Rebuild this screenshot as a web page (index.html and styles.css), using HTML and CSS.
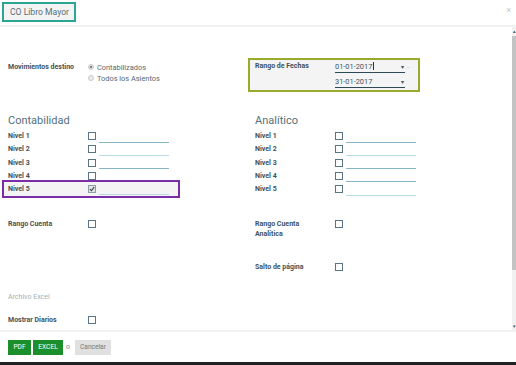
FILE: index.html
```html
<!DOCTYPE html>
<html lang="es">

<head>
  <meta charset="UTF-8">
  <meta name="viewport" content="width=device-width, initial-scale=1.0">
  <link rel="stylesheet" href="styles.css">
  <title>CO Libro Mayor</title>
</head>

<body>

  <div class="dialog">
    <div class="header">
      <div class="title">CO Libro Mayor</div>
      <span class="close">&times;</span>
    </div>

    <div class="main">
      <div class="content">

        <div class="grid top">
          <div class="col col-moves">
            <div class="row">
              <span class="label">Movimientos destino</span>
              <div class="radios">
                <div class="radio"><span class="dot checked"></span>Contabilizados</div>
                <div class="radio"><span class="dot"></span>Todos los Asientos</div>
              </div>
            </div>
          </div>
          <div class="col">
            <div class="dates">
              <div class="date-row">
                <span class="label">Rango de Fechas</span>
                <div class="date-field">
                  <span>01-01-2017<span class="caret"></span></span>
                  <span class="arrow">&#9662;</span><span class="spin">-</span>
                </div>
              </div>
              <div class="date-row second">
                <span class="label"></span>
                <div class="date-field">
                  <span>31-01-2017</span>
                  <span class="arrow">&#9662;</span>
                </div>
              </div>
            </div>
          </div>
        </div>

        <div class="grid levels">
          <div class="col">
            <h2 class="section">Contabilidad</h2>
            <div class="level"><span class="label">Nivel 1</span><span class="check"></span><span class="line"></span></div>
            <div class="level"><span class="label">Nivel 2</span><span class="check"></span><span class="line light"></span></div>
            <div class="level"><span class="label">Nivel 3</span><span class="check"></span><span class="line"></span></div>
            <div class="level"><span class="label">Nivel 4</span><span class="check"></span></div>
            <div class="level active">
              <span class="label">Nivel 5</span>
              <span class="check checked">
                <svg width="6" height="6" viewBox="0 0 6 6"><path d="M0.8 3.2 L2.4 4.6 L5.3 1.2" fill="none" stroke="#3b4c54" stroke-width="1.1"/></svg>
              </span>
              <span class="line light"></span>
            </div>
          </div>
          <div class="col">
            <h2 class="section">Analítico</h2>
            <div class="level"><span class="label">Nivel 1</span><span class="check"></span><span class="line"></span></div>
            <div class="level"><span class="label">Nivel 2</span><span class="check"></span><span class="line light"></span></div>
            <div class="level"><span class="label">Nivel 3</span><span class="check"></span><span class="line"></span></div>
            <div class="level"><span class="label">Nivel 4</span><span class="check"></span><span class="line"></span></div>
            <div class="level"><span class="label">Nivel 5</span><span class="check"></span><span class="line light"></span></div>
          </div>
        </div>

        <div class="grid ranges">
          <div class="col">
            <div class="opt"><span class="label">Rango Cuenta</span><span class="check"></span></div>
          </div>
          <div class="col">
            <div class="opt"><span class="label">Rango Cuenta<br>Analítica</span><span class="check"></span></div>
          </div>
        </div>

        <div class="grid pages">
          <div class="col"></div>
          <div class="col">
            <div class="opt"><span class="label">Salto de página</span><span class="check"></span></div>
          </div>
        </div>

        <div class="excel-title">Archivo Excel</div>

        <div class="opt journals"><span class="label">Mostrar Diarios</span><span class="check"></span></div>

      </div>

      <div class="scrollbar">
        <span class="sb-arrow">&#9652;</span>
        <div class="sb-track"><div class="sb-thumb"></div></div>
        <span class="sb-arrow">&#9662;</span>
      </div>
    </div>

    <div class="footer">
      <button class="btn primary">PDF</button>
      <button class="btn primary excel">EXCEL</button>
      <span class="or">o</span>
      <button class="btn cancel">Cancelar</button>
    </div>
  </div>

</body>

</html>
```

FILE: styles.css
```css
* {
  box-sizing: border-box;
}

body {
  margin: 0;
  font-family: Roboto, "Liberation Sans", sans-serif;
  background-color: #ffffff;
  color: #3f525b;
}

.dialog {
  width: 516px;
  height: 365px;
  display: flex;
  flex-direction: column;
  border-bottom: 3px solid #1f2326;
}

/* header */

.header {
  height: 27px;
  padding: 2px;
  border-bottom: 2px solid #f1f1f1;
  display: flex;
  justify-content: space-between;
  align-items: flex-start;
}

.title {
  width: 74px;
  height: 20px;
  padding-left: 6px;
  border: 2px solid #2aa596;
  background-color: #f4f4f4;
  color: #5a6d76;
  font-size: 8.6px;
  line-height: 16px;
}

.close {
  margin: 3px 3px 0 0;
  color: #c4c4c4;
  font-size: 9px;
  line-height: 10px;
}

/* body */

.main {
  height: 303px;
  display: flex;
}

.content {
  flex: 1;
  padding-left: 8px;
  overflow: hidden;
}

.grid {
  display: grid;
  grid-template-columns: 247px 1fr;
}

.label {
  font-size: 7px;
  font-weight: 700;
  color: #3f525b;
}

.top {
  margin-top: 31px;
}

.col-moves {
  padding-top: 3.5px;
}

.row {
  display: flex;
}

.row .label {
  width: 80px;
  line-height: 11px;
}

.radio {
  display: flex;
  align-items: center;
  font-size: 7.4px;
  line-height: 11px;
  color: #56696f;
}

.dot {
  width: 6px;
  height: 6px;
  margin-right: 3px;
  border-radius: 50%;
  border: 1px solid #c8c8c8;
  background-color: #ececec;
}

.dot.checked {
  background: radial-gradient(circle, #7d7d7d 0 1.3px, #ececec 1.6px);
}

.dates {
  width: 172px;
  margin-left: -7px;
  padding: 0 5px 2px;
  border: 2px solid #9aab2c;
  background-color: #f4f4f4;
}

.date-row {
  display: flex;
}

.date-row.second {
  margin-top: 2px;
}

.date-row .label {
  width: 80px;
  padding-top: 1px;
  line-height: 11px;
}

.date-field {
  width: 70px;
  height: 13px;
  padding-top: 1px;
  border-bottom: 1px solid #2c4a55;
  display: flex;
  justify-content: space-between;
  font-size: 7.4px;
  line-height: 11px;
  color: #3d545e;
  position: relative;
}

.caret {
  display: inline-block;
  width: 1px;
  height: 8px;
  margin-left: 1px;
  vertical-align: -1px;
  background-color: #333333;
}

.arrow {
  margin-right: 1px;
  font-size: 6px;
  color: #3d545e;
}

.spin {
  position: absolute;
  right: -4px;
  top: 1px;
  font-size: 6px;
  color: #9a9a9a;
}

/* levels */

.levels {
  margin-top: 22px;
}

.section {
  margin: 0 0 1.4px;
  font-size: 11px;
  font-weight: 400;
  line-height: 14px;
  color: #55707b;
}

.level {
  height: 13.25px;
  display: flex;
  align-items: center;
}

.level .label {
  width: 80px;
}

.check {
  width: 8px;
  height: 8px;
  border: 1px solid #5b7682;
  background-color: #ffffff;
  display: flex;
  align-items: center;
  justify-content: center;
}

.check.checked {
  border-color: #8e9ea5;
  background-color: #e2e2e2;
}

.line {
  width: 70px;
  height: 13px;
  margin-left: 3px;
  border-bottom: 1px solid #87b6c6;
}

.line.light {
  border-bottom-color: #b9dbe3;
}

.level.active {
  width: 178px;
  height: 17.25px;
  margin: -2px 0 0 -6px;
  padding-left: 4px;
  border: 2px solid #7a2da6;
  background-color: #f4f4f4;
}

.level.active .line {
  height: 11px;
  align-self: flex-end;
  margin-bottom: 1px;
}

/* options */

.opt {
  display: flex;
  align-items: flex-start;
}

.opt .label {
  width: 80px;
  line-height: 10px;
}

.opt .check {
  margin-top: 1px;
}

.ranges {
  margin-top: 21px;
}

.pages {
  margin-top: 23px;
}

.excel-title {
  margin-top: 20px;
  font-size: 7px;
  line-height: 10px;
  color: #9fb0b6;
}

.journals {
  margin-top: 13px;
}

/* scrollbar */

.scrollbar {
  width: 4px;
  background-color: #f1f1f1;
  display: flex;
  flex-direction: column;
  align-items: center;
}

.sb-arrow {
  height: 8px;
  font-size: 5px;
  line-height: 8px;
  color: #505050;
}

.sb-track {
  flex: 1;
  width: 100%;
  padding-top: 1px;
}

.sb-thumb {
  height: 234px;
  background-color: #c3c3c3;
}

/* footer */

.footer {
  flex: 1;
  padding: 8px 8px 0;
  border-top: 2px solid #f1f1f1;
  display: flex;
  align-items: flex-start;
}

.btn {
  height: 15px;
  padding: 0;
  border: none;
  font-family: Roboto, "Liberation Sans", sans-serif;
  font-size: 6.6px;
  line-height: 15px;
}

.btn.primary {
  width: 23px;
  background-color: #1b8f2b;
  color: #ffffff;
}

.btn.excel {
  width: 30px;
  margin-left: 2px;
}

.or {
  margin: 0 5px 0 3px;
  font-size: 7px;
  line-height: 15px;
  color: #7a8a90;
}

.btn.cancel {
  width: 36px;
  background-color: #e0e0e0;
  color: #6b7a80;
}
```
